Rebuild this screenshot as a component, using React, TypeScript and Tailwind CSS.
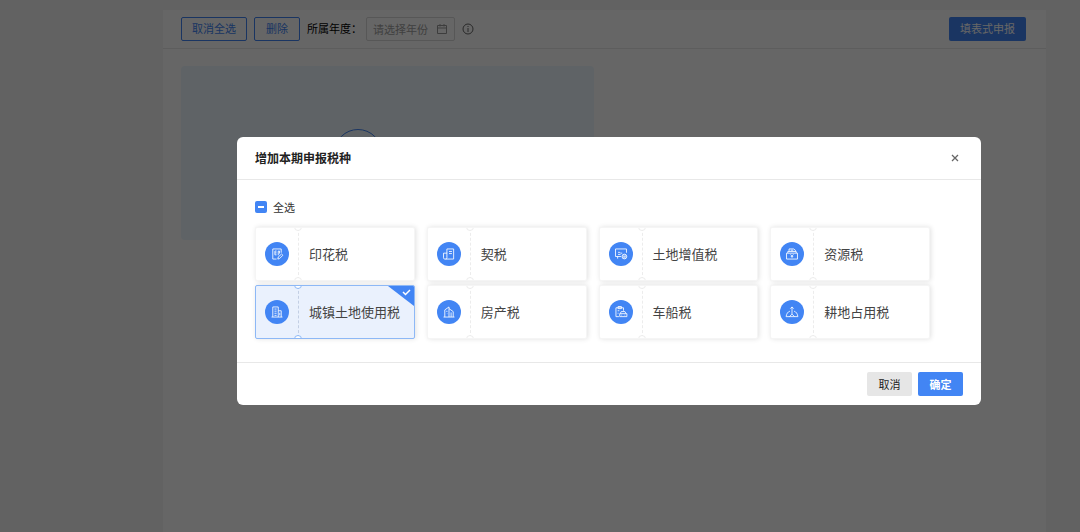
import { useState } from "react";
import type { ReactNode } from "react";

const ICONS: Record<string, ReactNode> = {
  stamp: (
    <>
      <path d="M14.500 8V3.500h-10v12H9" />
      <path d="M7 6v4.500M7 6h2M7 8.200h2M7 10.500h2M11 6h1.500v3M11 6v5" />
      <path d="m10.500 15.500.5-2.500 4-3.500 1.500 1.500-4 4z" />
    </>
  ),
  deed: (
    <>
      <path d="M7 3.500h8v12H4.500a1.500 1.500 0 0 1-1.500-1.500V8.500h4z" />
      <path d="M7 8v6a1.500 1.500 0 0 1-1.500 1.500M9.500 6.500h3.500M9.500 9h3.500" />
    </>
  ),
  landGain: (
    <>
      <path d="M9.500 12.500H3v-9h13V8M5.500 12.500v2.500M6 7.500h2l1 1h2M6 10h3" />
      <circle cx="13.500" cy="12.500" r="2.800" fill="#fff" fillOpacity=".35" />
      <path d="m12.300 12.500 1 1 1.500-1.700" />
    </>
  ),
  resource: (
    <>
      <path d="M3 8.500h13v7H3zM4.500 8.500v-2h10v2M6 6.500v-3h5.500l2 1.500v1.500M8 5h3" />
      <path d="m7.800 10 1.700 1.700 1.700-1.700M9.500 11.500v2.500M8 12.200h3" />
    </>
  ),
  building: (
    <>
      <path d="M4.500 15.500v-12h6.500v12M11 8h3.500v7.500M3 15.500h13" />
      <path d="M6.500 6H9M6.500 8.500H9M6.500 11H9M6.500 13.500H9M12.800 10.500v3" />
    </>
  ),
  house: (
    <>
      <path d="M4.500 15.500V7l5-3.500v12M9.500 5.500 14.500 9v6.500M3 15.500h13" />
      <path d="M7 8v1.500M7 11.500h.5M12 10v5.500" />
    </>
  ),
  vehicle: (
    <>
      <path d="M7 15H3.500V4.500h9V8M6 3h4v2.500H6zM5.500 8h2M5.500 11h1" />
      <path d="M8.500 11.500 9.800 9h4.400l1.300 2.500M8 11.500h8.500v3.500H8zM10 13.200h.8M13.700 13.200h.8" />
    </>
  ),
  farmland: (
    <>
      <path d="M9.500 12V3.500M7.500 5.500l2-2 2 2M7 8.500c-2.500.8-4 3-4.500 6.500h14c-.5-3.500-2-5.700-4.500-6.500" />
      <path d="m6.500 15 3-3 3 3" />
    </>
  ),
};

const TAXES = [
  { name: "印花税", icon: "stamp" },
  { name: "契税", icon: "deed" },
  { name: "土地增值税", icon: "landGain" },
  { name: "资源税", icon: "resource" },
  { name: "城镇土地使用税", icon: "building" },
  { name: "房产税", icon: "house" },
  { name: "车船税", icon: "vehicle" },
  { name: "耕地占用税", icon: "farmland" },
];

type TaxCardProps = { name: string; icon: string; selected: boolean; onToggle: () => void };

function TaxCard({ name, icon, selected, onToggle }: TaxCardProps) {
  const edge = selected ? "border-[#8db8f6]" : "border-[#ececec]";
  return (
    <button
      type="button"
      aria-pressed={selected}
      onClick={onToggle}
      className={`relative flex h-[54px] items-center overflow-hidden rounded-xs border text-left shadow-[1px_0_5px_rgba(0,0,0,0.12)] ${
        selected ? "border-[#8db8f6] bg-[#eaf1fd]" : "border-[#f5f5f5] bg-white"
      }`}
    >
      <span className="flex w-[42px] shrink-0 justify-center">
        <span className="flex size-6 items-center justify-center rounded-full bg-[#4285f4]">
          <svg viewBox="0 0 19 19" className="size-4 fill-none stroke-white stroke-1" aria-hidden="true">
            {ICONS[icon]}
          </svg>
        </span>
      </span>
      <span className={`h-full border-l border-dashed ${selected ? "border-[#c3cfe4]" : "border-[#ececec]"}`} />
      <span className={`absolute -top-[5px] left-[38px] size-2 rounded-full border bg-white ${edge}`} />
      <span className={`absolute -bottom-[5px] left-[38px] size-2 rounded-full border bg-white ${edge}`} />
      <span className="pl-2.5 text-[13px] whitespace-nowrap text-[#444]">{name}</span>
      {selected && (
        <svg viewBox="0 0 26 20" className="absolute top-0 right-0 h-5 w-[26px]" aria-hidden="true">
          <path d="M0 0h26v20z" fill="#4285f4" />
          <path d="m15 6 2.500 2.500L22 4" fill="none" stroke="#fff" strokeWidth="1.500" />
        </svg>
      )}
    </button>
  );
}

export default function App() {
  const [selected, setSelected] = useState<string[]>(["城镇土地使用税"]);
  const all = selected.length === TAXES.length;
  const toggle = (name: string) =>
    setSelected((now) => (now.includes(name) ? now.filter((n) => n !== name) : [...now, name]));

  return (
    <div className="min-h-screen bg-[#f5f5f5] pt-2.5 pr-[34px] pl-[163px] font-['Noto_Sans_CJK_SC',sans-serif] text-[#333]">
      <main className="min-h-[calc(100vh-10px)] bg-white">
        <header className="flex h-[39px] items-center border-b border-[#e8e8e8] pr-5 pl-[18px] text-[11px]">
          <button type="button" className="h-6 rounded-xs border border-[#4285f4] px-2.5 pb-0.5 text-[#4285f4]">
            取消全选
          </button>
          <button type="button" className="ml-[7px] h-6 rounded-xs border border-[#4285f4] px-[11px] pb-0.5 text-[#4285f4]">
            删除
          </button>
          <label htmlFor="year" className="ml-[7px] pb-0.5 text-black">
            所属年度：
          </label>
          <div className="ml-1 flex h-6 w-[89px] items-center rounded-xs border border-[#d9d9d9] px-1.5">
            <input
              id="year"
              placeholder="请选择年份"
              className="w-full min-w-0 outline-none placeholder:text-[#a0a0a0]"
            />
            <svg viewBox="0 0 12 12" className="size-3 shrink-0 fill-none stroke-[#999]" aria-hidden="true">
              <path d="M1.500 2.500h9v8h-9zM1.500 5h9M4 1v2.500M8 1v2.500" />
            </svg>
          </div>
          <svg viewBox="0 0 12 12" className="ml-[7px] size-3 fill-none stroke-[#666]" aria-hidden="true">
            <circle cx="6" cy="6" r="5" />
            <path d="M6 5v4M6 3v1" />
          </svg>
          <button type="button" className="ml-auto h-6 rounded-xs bg-[#4285f4] px-[11px] pb-0.5 text-white">
            填表式申报
          </button>
        </header>
        <div className="px-[18px] pt-[17px]">
          <section className="flex h-[174px] w-[413px] max-w-full justify-center rounded-sm bg-[#edf8ff] pt-[63px]">
            <span className="mr-[60px] size-12 rounded-full border border-[#4285f4]" />
          </section>
        </div>
      </main>

      <div className="fixed inset-0 bg-black/60 pt-[137px] pr-[99px] pl-[237px]">
        <div role="dialog" aria-modal="true" aria-labelledby="title" className="rounded-md bg-white">
          <div className="flex h-[43px] items-center justify-between border-b border-[#e8e8e8] px-[18px]">
            <h2 id="title" className="text-xs font-bold text-[#222]">
              增加本期申报税种
            </h2>
            <button type="button" aria-label="关闭" className="flex size-4 items-center justify-center">
              <svg viewBox="0 0 8 8" className="size-2 stroke-[#666]" aria-hidden="true">
                <path d="m1 1 6 6M7 1 1 7" strokeWidth="1.300" />
              </svg>
            </button>
          </div>
          <div className="pt-[19px] pr-[51px] pb-[23px] pl-[18px]">
            <label className="flex h-4 w-fit items-center gap-1.5 text-[11px]">
              <span className="relative flex size-3">
                <input
                  type="checkbox"
                  checked={all}
                  onChange={() => setSelected(all ? [] : TAXES.map((t) => t.name))}
                  className="size-3 appearance-none rounded-xs bg-[#4285f4]"
                />
                <span className="pointer-events-none absolute inset-x-[3px] top-[5px] h-0.5 bg-white" />
              </span>
              全选
            </label>
            <div className="mt-3 grid grid-cols-4 gap-x-3 gap-y-1">
              {TAXES.map((t) => (
                <TaxCard key={t.name} {...t} selected={selected.includes(t.name)} onToggle={() => toggle(t.name)} />
              ))}
            </div>
          </div>
          <div className="flex h-[43px] items-center justify-end gap-1.5 border-t border-[#e8e8e8] px-[18px] text-[11px]">
            <button type="button" className="h-6 w-[45px] rounded-xs bg-[#e6e6e6] text-[#222]">
              取消
            </button>
            <button type="button" className="h-6 w-[45px] rounded-xs bg-[#4285f4] font-bold text-white">
              确定
            </button>
          </div>
        </div>
      </div>
    </div>
  );
}
